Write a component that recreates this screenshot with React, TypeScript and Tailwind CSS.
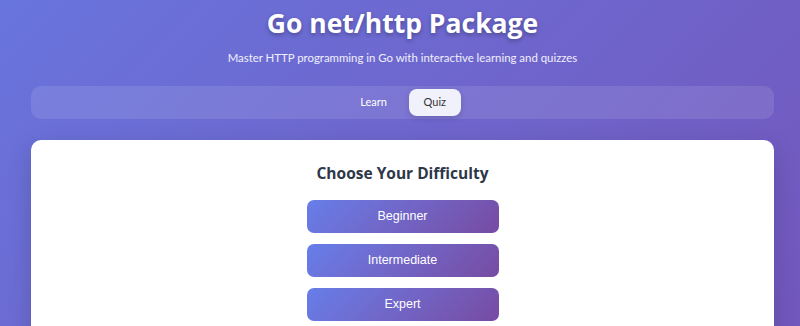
export default function App() {
  const levels = ["Beginner", "Intermediate", "Expert"];

  return (
    <div
      className="min-h-screen h-[326px] overflow-hidden bg-linear-135 from-[#6874dd] to-[#7257bc] pl-[31px] pr-[26px]"
      style={{ fontFamily: 'Lato, "Open Sans", sans-serif' }}
    >
      {/* Header */}
      <header className="pt-[6px] text-center text-white">
        <h1
          className="text-[26.5px] font-bold leading-[34px] [text-shadow:0_2px_4px_rgba(0,0,0,0.3)]"
          style={{ fontFamily: '"Open Sans", sans-serif' }}
        >
          Go net/http Package
        </h1>
        <p className="mt-[10px] text-[11.4px] leading-[16px] text-white/90">
          Master HTTP programming in Go with interactive learning and quizzes
        </p>
      </header>

      {/* Tabs */}
      <nav className="mt-[20px] flex h-[33px] items-center justify-center gap-[6px] rounded-[10px] bg-white/10">
        <button className="h-[27px] rounded-[8px] px-4 text-[11px] text-white">Learn</button>
        <button className="h-[27px] w-[52px] rounded-[8px] bg-[#f1f1fb] text-[11px] text-[#333] shadow-[0_2px_6px_rgba(0,0,0,0.15)]">
          Quiz
        </button>
      </nav>

      {/* Quiz card */}
      <main className="mt-[21px] rounded-[10px] bg-white pt-[22px] pb-8 shadow-[0_8px_24px_rgba(0,0,0,0.15)]">
        <h2
          className="text-center text-[15.5px] font-bold leading-[22px] text-[#2d3748]"
          style={{ fontFamily: '"Open Sans", sans-serif' }}
        >
          Choose Your Difficulty
        </h2>
        <div className="mt-[16px] flex flex-col items-center gap-[11px]">
          {levels.map((level) => (
            <button
              key={level}
              className="h-[33px] w-[192px] rounded-[7px] bg-linear-135 from-[#667eea] to-[#764ba2] text-[12.5px] text-white"
              style={{ fontFamily: '"Liberation Sans", Arial, sans-serif' }}
            >
              {level}
            </button>
          ))}
        </div>
      </main>
    </div>
  );
}
